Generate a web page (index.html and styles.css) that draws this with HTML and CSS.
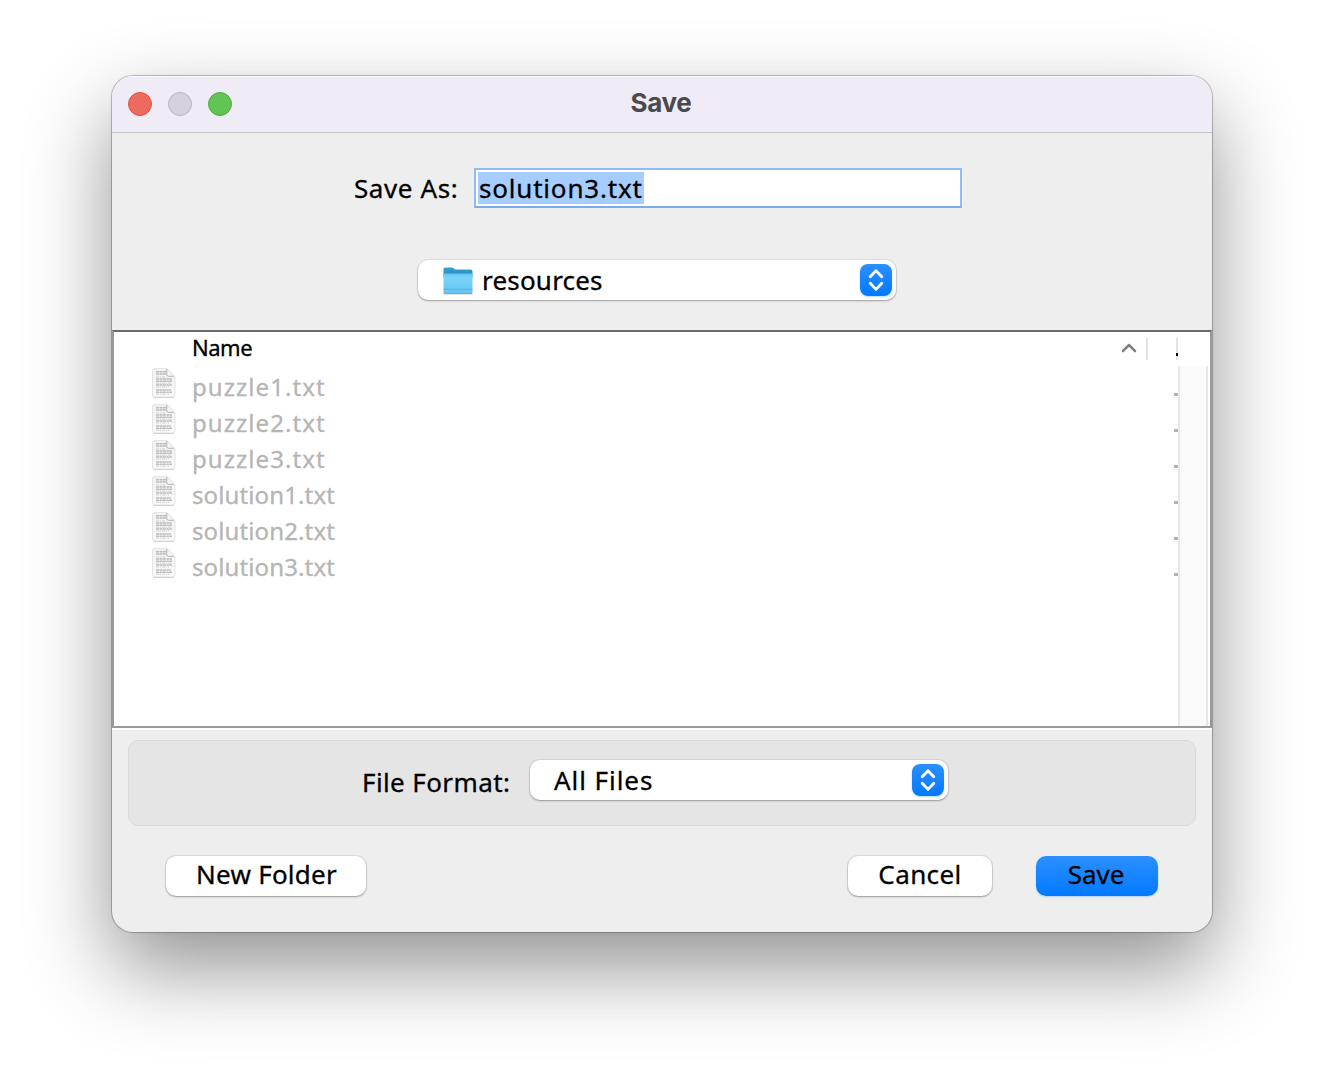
FILE: index.html
```html
<!DOCTYPE html>
<html lang="en">
<head>
<meta charset="utf-8">
<title>Save</title>
<link rel="stylesheet" href="styles.css">
</head>
<body>
<svg width="0" height="0" class="defs">
  <defs>
    <linearGradient id="paper" x1="0" y1="0" x2="0" y2="1"><stop offset="0" stop-color="#f1f1f1"/><stop offset="1" stop-color="#fafafa"/></linearGradient>
    <linearGradient id="fold" x1="0" y1="1" x2="1" y2="0"><stop offset="0" stop-color="#fff"/><stop offset=".5" stop-color="#ececec"/><stop offset="1" stop-color="#ddd"/></linearGradient>
    <symbol id="doc" viewBox="0 0 26 32">
      <path d="M3 1.500h13l8 8v18.500a2 2 0 0 1-2 2h-18.500a2 2 0 0 1-2-2v-24.500a2 2 0 0 1 1.500-2z" fill="url(#paper)" stroke="#e4e4e4"/>
      <path d="M2.500 30.500h20.500" stroke="#d2d2d2" fill="none"/>
      <path d="M5 4.800h10M5 7h10M5 12h16M5 14.200h16M5 18h16M5 23h15M5 25.300h16" stroke="#bcbcbc" stroke-width="1.500" stroke-dasharray="3.300 .5 2.400 .4" fill="none"/>
      <path d="M5 10h10M5 16.200h15M5 20h13M5 27.200h13" stroke="#cfcfcf" stroke-width="1" stroke-dasharray="3 .7 1.500 .8" fill="none"/>
      <path d="M16 1.500v6a1.500 1.500 0 0 0 1.500 1.500h6z" fill="url(#fold)"/>
      <path d="M15.800 2v6q.2 1.200 1.700 1.300h5.500" fill="none" stroke="#b5b5b5"/>
    </symbol>
    <symbol id="updown" viewBox="0 0 32 32">
      <path d="M10.200 12.800 16 6.700l5.800 6.100M10.200 19.300 16 25.400l5.800-6.100" fill="none" stroke="#fff" stroke-width="2.800" stroke-linecap="round" stroke-linejoin="round"/>
    </symbol>
    <linearGradient id="folderback" x1="0" y1="0" x2="0" y2="1"><stop offset="0" stop-color="#3aa3d3"/><stop offset="1" stop-color="#1c83b5"/></linearGradient>
    <linearGradient id="folderfront" x1="0" y1="0" x2="0" y2="1"><stop offset="0" stop-color="#62c6f2"/><stop offset=".2" stop-color="#7ad3fa"/><stop offset="1" stop-color="#66c5f1"/></linearGradient>
  </defs>
</svg>
<main class="window">
  <header class="titlebar">
    <div class="lights"><i class="light close"></i><i class="light minimise"></i><i class="light zoom"></i></div>
    <h1 class="title">Save</h1>
  </header>
  <section class="top">
    <div class="name-row">
      <label class="label save-as">Save As:</label>
      <div class="field"><span class="selection">solution3.txt</span></div>
    </div>
    <div class="popup location">
      <svg class="folder" viewBox="0 0 32 30">
        <path d="M1.500 27h29v1.500h-29z" fill="#c4c4c4"/>
        <path d="M1.500 3q0-1.500 1.500-1.500h7q1 0 1.800.8l1.200 1.200h15.500q2 0 2 2v6h-29z" fill="url(#folderback)"/>
        <path d="M1.500 7.500h29v18.500q0 1.500-1.500 1.500h-26q-1.500 0-1.500-1.500z" fill="url(#folderfront)"/>
        <path d="M1.500 23.300h29M2 27.300h28" stroke="#4fafdc" stroke-width=".9"/>
      </svg>
      <span class="text resources">resources</span>
      <svg class="stepper"><use href="#updown"/></svg>
    </div>
  </section>
  <section class="files">
    <div class="head">
      <span class="name-head">Name</span>
      <svg class="sort" viewBox="0 0 16 12"><path d="M2 9 8 3l6 6" fill="none" stroke="#828282" stroke-width="2.500" stroke-linecap="round" stroke-linejoin="round"/></svg>
      <i class="divider"></i>
      <i class="divider clipped"></i>
    </div>
    <div class="body">
      <ul class="rows">
        <li><svg class="doc"><use href="#doc"/></svg><span class="puzzle">puzzle1.txt</span><i class="dot"></i></li>
        <li><svg class="doc"><use href="#doc"/></svg><span class="puzzle">puzzle2.txt</span><i class="dot"></i></li>
        <li><svg class="doc"><use href="#doc"/></svg><span class="puzzle">puzzle3.txt</span><i class="dot"></i></li>
        <li><svg class="doc"><use href="#doc"/></svg><span class="solution">solution1.txt</span><i class="dot"></i></li>
        <li><svg class="doc"><use href="#doc"/></svg><span class="solution">solution2.txt</span><i class="dot"></i></li>
        <li><svg class="doc"><use href="#doc"/></svg><span class="solution">solution3.txt</span><i class="dot"></i></li>
      </ul>
      <div class="scrollbar"></div>
    </div>
  </section>
  <section class="format">
    <label class="label file-format">File Format:</label>
    <div class="popup filter">
      <span class="text all-files">All Files</span>
      <svg class="stepper"><use href="#updown"/></svg>
    </div>
  </section>
  <footer class="actions">
    <button class="button new-folder">New Folder</button>
    <button class="button cancel">Cancel</button>
    <button class="button primary">Save</button>
  </footer>
</main>
</body>
</html>
```
FILE: styles.css
```css
* { box-sizing: border-box; }
body {
  margin: 0;
  height: 1080px;
  padding: 76px 112px 0;
  overflow: hidden;
  background: #fff;
  color: #000;
  font: 26px/40px "Noto Sans", "Open Sans", sans-serif;
}
.defs { display: block; height: 0; }
.window {
  width: 1100px;
  height: 856px;
  overflow: hidden;
  border-radius: 21px;
  background: #eee;
  box-shadow: 0 0 0 1px rgba(0, 0, 0, .2), 0 0 3px rgba(0, 0, 0, .12), 0 36px 84px rgba(0, 0, 0, .43);
}
.titlebar {
  display: grid;
  grid-template-columns: 120px 1fr 122px;
  align-items: center;
  height: 57px;
  background: #f0ecf6;
  border-bottom: 1px solid #c9c7cc;
  box-shadow: inset 0 1px #faf9fc;
}
.lights { display: flex; gap: 16px; padding-left: 16px; }
.light { width: 24px; height: 24px; border-radius: 50%; flex: none; }
.close { background: #ed6a5e; border: 1px solid #da5247; }
.minimise { background: #d6d2db; border: 1px solid #b8b4be; }
.zoom { background: #61c454; border: 1px solid #4fac42; }
.title {
  margin: 0 0 2px;
  color: #4a494b;
  text-align: center;
  font: 700 26px/32px Inter, sans-serif;
  letter-spacing: -.35px;
}
.top { height: 197px; padding-top: 35px; }
.label, .text, .selection, .name-head, .rows span, .button {
  white-space: nowrap;
  -webkit-text-stroke: .3px currentColor;
}
.name-row { display: flex; height: 40px; padding-left: 242px; }
.save-as { width: 120px; letter-spacing: .6px; }
.field {
  width: 488px;
  height: 40px;
  padding: 2px;
  border: 2px solid #8dbdf2;
  border-bottom-color: #78aceb;
  border-radius: 1px;
  background: #fff;
}
.selection {
  display: block;
  width: 166px;
  height: 32px;
  padding-left: 1px;
  line-height: 32px;
  letter-spacing: .8px;
  background: #a5cdff;
}
.popup {
  display: flex;
  align-items: center;
  height: 40px;
  padding-right: 4px;
  border-radius: 10px;
  background: #fff;
  box-shadow: 0 0 0 1px rgba(0, 0, 0, .06), 0 1px 2px rgba(0, 0, 0, .3);
}
.location { width: 478px; margin: 52px 0 0 306px; padding-left: 24px; }
.folder { width: 32px; height: 30px; margin: 1px 8px 0 0; }
.resources { letter-spacing: .2px; }
.all-files { letter-spacing: .95px; }
.stepper {
  width: 32px;
  height: 32px;
  margin-left: auto;
  border-radius: 8px;
  background: linear-gradient(#2c90ff, #0279ff);
  box-shadow: 0 1px 2px rgba(0, 122, 255, .3);
}
.files {
  display: flex;
  flex-direction: column;
  height: 398px;
  border: 2px solid #999;
  border-top-color: #6b6b6b;
  background: #fff;
  box-shadow: 0 2px #fff;
}
.head {
  display: flex;
  height: 34px;
  padding: 0 32px 0 78px;
  font-size: 22px;
  line-height: 31px;
}
.name-head { letter-spacing: -.5px; }
.sort { width: 16px; height: 12px; margin: 10px 9px 0 auto; }
.divider { width: 2px; height: 22px; margin-top: 6px; background: #e2e2e2; }
.clipped { margin-left: 28px; background: linear-gradient(#e2e2e2 15px, #000 15px 18px, #e2e2e2 18px); }
.body { display: flex; flex: 1; }
.rows { width: 1064px; margin: 0; padding: 0; list-style: none; color: #b5b5b5; font-size: 24px; }
.rows li { display: flex; height: 36px; padding-left: 37px; line-height: 41px; }
.puzzle { letter-spacing: 1.05px; }
.solution { letter-spacing: .12px; }
.doc { width: 26px; height: 32px; margin: 1px 15px 0 0; }
.dot { width: 4px; height: 3px; margin: 27px 0 0 auto; background: #b3b3b3; }
.scrollbar {
  width: 30px;
  border: solid #e8e8e8;
  border-width: 0 2px;
  background: #fafafa;
}
.format {
  display: flex;
  height: 86px;
  margin: 12px 16px 0;
  padding: 20px 0 0 233px;
  border: 1px solid #dadada;
  border-radius: 10px;
  background: #e5e5e5;
}
.file-format { width: 168px; padding-top: 1px; letter-spacing: .4px; }
.filter { width: 418px; margin-top: -1px; padding-left: 24px; }
.actions { display: flex; padding: 30px 54px 0; }
.button {
  height: 40px;
  padding: 0 0 4px;
  border: 0;
  border-radius: 10px;
  background: #fff;
  color: #000;
  font: inherit;
  line-height: 36px;
  box-shadow: 0 0 0 1px rgba(0, 0, 0, .07), 0 1px 2px rgba(0, 0, 0, .3);
}
.new-folder { width: 200px; padding-left: 1px; letter-spacing: .25px; }
.cancel { width: 144px; margin-left: auto; letter-spacing: .4px; }
.primary {
  width: 122px;
  margin-left: 44px;
  padding-right: 2px;
  background: linear-gradient(#2c90ff, #0279ff);
  box-shadow: 0 1px 2px rgba(0, 122, 255, .25);
}
```
